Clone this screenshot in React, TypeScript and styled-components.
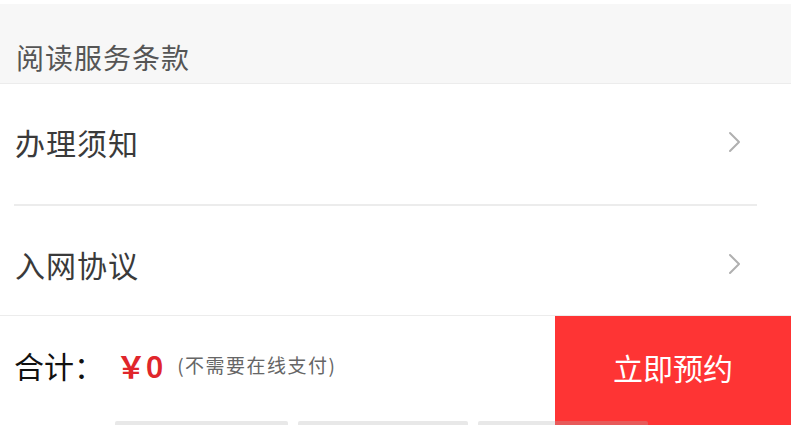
import React from "react";
import styled, { createGlobalStyle } from "styled-components";

const GlobalStyle = createGlobalStyle`
  html, body {
    margin: 0;
    padding: 0;
    background: #fff;
    font-family: "Noto Sans CJK SC", "Noto Sans", sans-serif;
  }
`;

const Page = styled.div`
  min-height: 100vh;
  background: #fff;
`;

const SectionHeader = styled.div`
  height: 80px;
  margin-top: 4px;
  background: #f7f7f7;
  border-bottom: 1px solid #ececec;
  display: flex;
  align-items: flex-end;
  padding: 0 0 6px 16px;
  box-sizing: border-box;
  font-size: 28px;
  letter-spacing: 1px;
  color: #555;
`;

const List = styled.div`
  background: #fff;
`;

const Row = styled.div`
  height: 120px;
  display: flex;
  align-items: center;
  justify-content: space-between;
  padding: 0 48px 4px 15px;
  font-size: 30px;
  letter-spacing: 1px;
  color: #3a3a3a;
  box-sizing: border-box;
`;

const Divider = styled.div`
  height: 2px;
  background: #ececec;
  margin: 0 34px 0 14px;
`;

const Chevron = () => (
  <svg width="16" height="24" viewBox="0 0 16 24" fill="none">
    <path d="M3 3l9 9-9 9" stroke="#b0b0b0" strokeWidth="2" strokeLinecap="round" strokeLinejoin="round" />
  </svg>
);

const BottomBar = styled.div`
  position: fixed;
  left: 0;
  right: 0;
  bottom: 0;
  height: 109px;
  background: #fff;
  border-top: 1px solid #ececec;
  display: flex;
  align-items: stretch;
`;

const Total = styled.div`
  flex: 1;
  display: flex;
  align-items: center;
  padding-left: 14px;
  padding-bottom: 12px;
`;

const TotalLabel = styled.span`
  font-size: 30px;
  color: #111;
  margin-right: 12px;
`;

const Price = styled.span`
  font-family: "Noto Sans", "Noto Sans CJK SC", sans-serif;
  font-size: 30px;
  color: #e0262b;
  font-weight: 600;
  margin-right: 14px;
`;

const Note = styled.span`
  font-size: 19px;
  letter-spacing: 1.5px;
  color: #666;
`;

const BookButton = styled.button`
  width: 236px;
  border: none;
  background: #fe3434;
  color: #fff;
  font-family: "Noto Sans CJK SC", sans-serif;
  font-size: 30px;
  padding: 0 0 8px;
  cursor: pointer;
`;

const Peek = styled.div`
  position: fixed;
  left: 115px;
  bottom: 0;
  height: 4px;
  display: flex;
  gap: 10px;
`;

const PeekTab = styled.div<{ $w: number }>`
  width: ${(p) => p.$w}px;
  background: rgba(180, 180, 180, 0.3);
  border-radius: 2px 2px 0 0;
`;

export default function App() {
  return (
    <Page>
      <GlobalStyle />
      <SectionHeader>阅读服务条款</SectionHeader>
      <List>
        <Row>
          办理须知
          <Chevron />
        </Row>
        <Divider />
        <Row>
          入网协议
          <Chevron />
        </Row>
      </List>
      <BottomBar>
        <Total>
          <TotalLabel>合计：</TotalLabel>
          <Price>￥0</Price>
          <Note>(不需要在线支付)</Note>
        </Total>
        <BookButton>立即预约</BookButton>
      </BottomBar>
      <Peek>
        <PeekTab $w={173} />
        <PeekTab $w={170} />
        <PeekTab $w={170} />
      </Peek>
    </Page>
  );
}
